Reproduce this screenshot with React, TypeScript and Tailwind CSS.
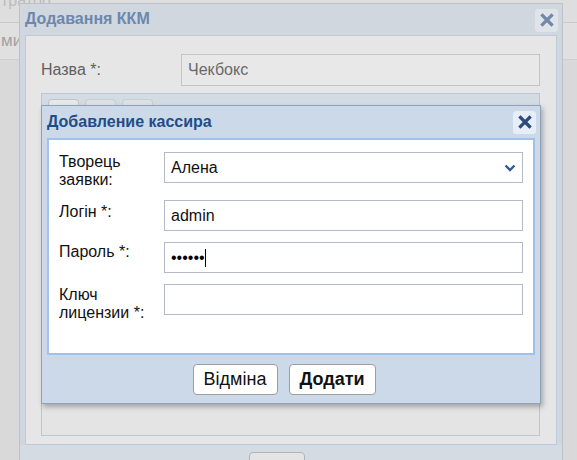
import React from 'react';

// Thick "x" used by both dialog close buttons
function CloseIcon({ color }: { color: string }) {
  return (
    <svg width="14" height="14" viewBox="0 0 14 14">
      <path d="M2.5 2.5 L11.5 11.5 M11.5 2.5 L2.5 11.5" stroke={color} strokeWidth="3.2" strokeLinecap="square" />
    </svg>
  );
}

function Chevron() {
  return (
    <svg width="12" height="8" viewBox="0 0 12 8">
      <path d="M1.5 1.5 L6 6 L10.5 1.5" fill="none" stroke="#2f5a93" strokeWidth="2.4" />
    </svg>
  );
}

const fieldBox = 'h-[31px] border border-[#b6b9c9] bg-white flex items-center pl-[6px] text-[16px] text-[#111]';

export default function App() {
  return (
    <div className="relative w-[577px] h-[460px] overflow-hidden bg-[#d9d9d9] font-['Liberation_Sans',Arial,sans-serif]">
      {/* page behind the dialogs */}
      <div className="h-[23px] overflow-hidden border-b border-[#c9c9c9] bg-[#dedede]">
        <div className="-mt-[9px] pl-[1px] text-[16px] leading-[20px] text-[#bcbcbc]">тратор</div>
      </div>
      <div className="h-[37px] flex items-center border-b border-[#cfcfcf] bg-[#e0e0e0] text-[17px] text-[#a2a2a2]">
        <span className="pl-[1px]">миністрування</span>
      </div>
      <div className="h-[400px] bg-[#d9d9d9]" />

      {/* outer dialog */}
      <div className="absolute left-[19px] top-[3px] w-[544px] h-[470px] flex flex-col border border-[#bcc2ca] bg-[#d0d7df]">
        <div className="h-[31px] flex items-center justify-between pl-[5px] pr-[4px]">
          <span className="text-[16px] font-bold text-[#6d87ad]">Додавання ККМ</span>
          <div className="mt-[2px] w-[23px] h-[23px] rounded-[3px] bg-[#dfe4ea] flex items-center justify-center">
            <CloseIcon color="#7189a8" />
          </div>
        </div>
        <div className="mx-[5px] h-[415px] border border-[#bccadb] bg-[#e6e6e6] pl-[15px] pr-[16px] pt-[18px]">
          <div className="flex">
            <div className="w-[140px] pt-[4px] text-[16px] text-[#5f5f5f]">Назва *:</div>
            <div className="flex-1 h-[32px] border border-[#c4c4c4] bg-[#e8e8e8] flex items-center pl-[6px] text-[16px] text-[#6a6a6a]">
              Чекбокс
            </div>
          </div>
          <div className="mt-[7px] h-[343px] border border-[#b7c6d8] bg-[#e4e4e4]">
            <div className="h-[11px] bg-[#d3dbe3] flex items-end gap-[6px] pl-[6px]">
              <div className="w-[31px] h-[6px] rounded-t-[4px] border border-b-0 border-[#bfc5cc] bg-[#e8e8e8]" />
              <div className="w-[31px] h-[6px] rounded-t-[4px] border border-b-0 border-[#c8ced5] bg-[#dde1e6]" />
              <div className="w-[31px] h-[6px] rounded-t-[4px] border border-b-0 border-[#c8ced5] bg-[#dde1e6]" />
            </div>
          </div>
        </div>
        <div className="flex-1 bg-[#d5dbe2] pl-[229px] pt-[7px]">
          <div className="w-[56px] h-[20px] rounded-[4px] border border-[#b0b4b9] bg-[#e4e4e4]" />
        </div>
      </div>

      {/* inner dialog */}
      <div className="absolute left-[41px] top-[105px] w-[500px] h-[299px] flex flex-col border border-[#8fa2bb] bg-[#ccd9e8] shadow-[2px_3px_5px_rgba(0,0,0,0.28)]">
        <div className="h-[32px] flex items-center justify-between pl-[5px] pr-[4px]">
          <span className="text-[16px] font-bold text-[#1f4d8a]">Добавление кассира</span>
          <div className="w-[23px] h-[23px] rounded-[3px] bg-[#e5eef9] flex items-center justify-center">
            <CloseIcon color="#2c4b7a" />
          </div>
        </div>
        <div className="mx-[5px] h-[217px] border-2 border-[#9fc1ea] bg-white pl-[10px] pr-[10px] pt-[12px]">
          <div className="grid grid-cols-[105px_1fr] gap-y-[11px] text-[16px] leading-[18px] text-[#111]">
            <div className="pt-[1px]">Творець<br />заявки:</div>
            <div className={`${fieldBox} justify-between pr-[6px]`}>
              <span>Алена</span>
              <Chevron />
            </div>

            <div className="pt-[3px]">Логін *:</div>
            <div className={fieldBox}>admin</div>

            <div className="pt-[1px]">Пароль *:</div>
            <div className={`${fieldBox} border-[#7fb0de]`}>
              <span className="text-[16px] text-black">••••••</span>
              <span className="w-[1px] h-[18px] bg-black" />
            </div>

            <div className="pt-[2px]">Ключ<br />лицензии *:</div>
            <div className={fieldBox} />
          </div>
        </div>
        <div className="flex-1 flex items-center justify-center gap-[11px] pr-[14px]">
          <button className="w-[85px] h-[31px] rounded-[4px] border border-[#9d9d9d] bg-white text-[18px] text-[#111]">
            Відміна
          </button>
          <button className="w-[87px] h-[31px] rounded-[4px] border border-[#9d9d9d] bg-white text-[18px] font-bold text-[#111]">
            Додати
          </button>
        </div>
      </div>
    </div>
  );
}
